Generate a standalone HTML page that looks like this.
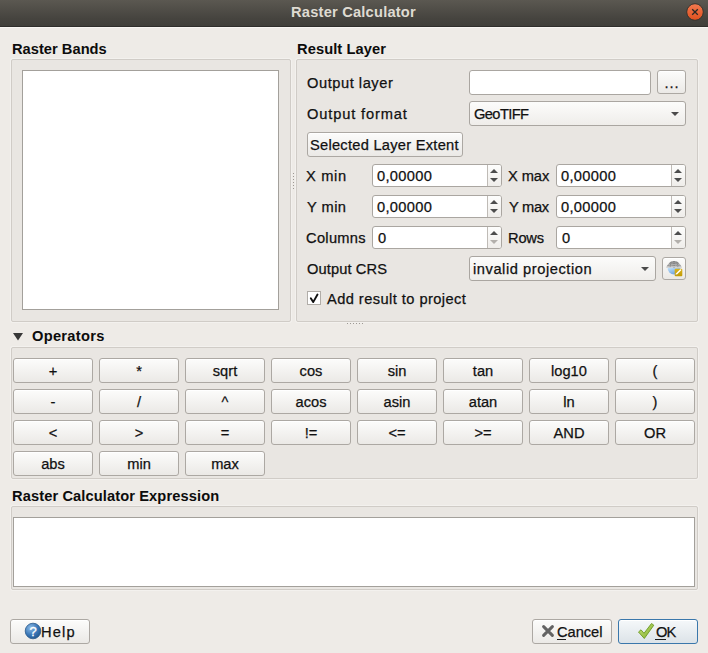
<!DOCTYPE html>
<html><head><meta charset="utf-8">
<style>
*{box-sizing:border-box;margin:0;padding:0}
html,body{width:708px;height:653px;overflow:hidden;background:#eeebe7;font-family:"Liberation Sans",sans-serif;font-size:14.67px;color:#111}
div,svg{position:absolute}
.t{white-space:nowrap;line-height:17px;height:17px;-webkit-text-stroke:0.25px #111}
.b{font-weight:bold;color:#0c0c0c;-webkit-text-stroke:0}
.grp{border:1px solid #d0ccc7;border-radius:2px;background:#e9e6e2;box-shadow:0 0 0 1px #f3f1ee}
.list{border:1px solid #a3a09b;background:#fff}
.edit{border:1px solid #aaa6a1;border-radius:3px;background:#fff}
.combo{border:1px solid #aaa6a1;border-radius:3px;background:linear-gradient(#fcfcfb,#efedea)}
.btn{border:1px solid #aca8a3;border-radius:3px;background:linear-gradient(#fcfcfb,#ebe9e6);box-shadow:inset 0 1px 0 #fff}
.bl{text-align:center}
.arrow{width:0;height:0;border-left:4px solid transparent;border-right:4px solid transparent;border-top:4px solid #4b4b4b}
.spin{border-left:1px solid #bfbbb6;background:linear-gradient(#fdfdfc,#efedea);border-radius:0 2px 2px 0}
.up{width:0;height:0;border-left:4px solid transparent;border-right:4px solid transparent;border-bottom:4px solid #4d4d4d}
.dn{width:0;height:0;border-left:4px solid transparent;border-right:4px solid transparent;border-top:4px solid #4d4d4d}
.dot{width:1px;height:1px;background:#9d9994}
</style></head><body>
<div style="left:0;top:0;width:708px;height:26px;background:linear-gradient(#5b5851,#46443f 70%,#403f3a)"></div>
<div style="left:0;top:26px;width:708px;height:1px;background:#2f2e2b"></div>
<div style="left:0;top:27px;width:708px;height:1px;background:#f8f6f2"></div>
<div class="t b" style="left:-0.50px;top:4px;width:708px;text-align:center;color:#dfdbd2;letter-spacing:0.206px">Raster Calculator</div>
<svg style="left:686px;top:3px" width="18" height="18" viewBox="0 0 18 18">
<defs><linearGradient id="cg" x1="0" y1="0" x2="0" y2="1"><stop offset="0" stop-color="#f27a50"/><stop offset="1" stop-color="#e0501e"/></linearGradient></defs>
<circle cx="9" cy="9" r="8.3" fill="url(#cg)" stroke="#36342f" stroke-width="1"/>
<path d="M6.2 6.2 L11.8 11.8 M11.8 6.2 L6.2 11.8" stroke="#2a2824" stroke-width="1.3"/>
</svg>
<div class="t b" style="left:12.00px;top:41px;letter-spacing:0.024px;">Raster Bands</div>
<div class="grp" style="left:11px;top:59px;width:280px;height:263px;"></div>
<div class="list" style="left:22px;top:70px;width:257px;height:240px;"></div>
<div class="dot" style="left:293px;top:173px"></div>
<div class="dot" style="left:347px;top:323px"></div>
<div class="dot" style="left:293px;top:176px"></div>
<div class="dot" style="left:350px;top:323px"></div>
<div class="dot" style="left:293px;top:179px"></div>
<div class="dot" style="left:353px;top:323px"></div>
<div class="dot" style="left:293px;top:182px"></div>
<div class="dot" style="left:356px;top:323px"></div>
<div class="dot" style="left:293px;top:185px"></div>
<div class="dot" style="left:359px;top:323px"></div>
<div class="dot" style="left:293px;top:188px"></div>
<div class="dot" style="left:362px;top:323px"></div>
<div class="t b" style="left:297.00px;top:41px;letter-spacing:0.082px;">Result Layer</div>
<div class="grp" style="left:296px;top:59px;width:402px;height:263px;"></div>
<div class="t " style="left:307.00px;top:75px;letter-spacing:0.542px;">Output layer</div>
<div class="edit" style="left:469px;top:70px;width:182px;height:25px;"></div>
<div class="btn" style="left:657px;top:70px;width:29px;height:24px;"></div>
<div class="t bl" style="left:657px;top:75px;width:29px;letter-spacing:1px;text-indent:1px">...</div>
<div class="t " style="left:307.00px;top:106px;letter-spacing:0.855px;">Output format</div>
<div class="combo" style="left:469px;top:101px;width:217px;height:25px;"></div>
<div class="t " style="left:474.00px;top:106px;letter-spacing:-0.600px;">GeoTIFF</div>
<div class="arrow" style="left:671px;top:112px"></div>
<div class="btn" style="left:307px;top:132px;width:156px;height:25px;"></div>
<div class="t " style="left:310.00px;top:137px;letter-spacing:0.260px;">Selected Layer Extent</div>
<div class="edit" style="left:372px;top:164px;width:130px;height:23px;"></div>
<div class="spin" style="left:487px;top:165px;width:14px;height:21px;"></div>
<div class="up" style="left:490px;top:169px"></div>
<div class="dn" style="left:490px;top:178px;border-top-color:#4d4d4d"></div>
<div class="edit" style="left:556px;top:164px;width:130px;height:23px;"></div>
<div class="spin" style="left:671px;top:165px;width:14px;height:21px;"></div>
<div class="up" style="left:674px;top:169px"></div>
<div class="dn" style="left:674px;top:178px;border-top-color:#4d4d4d"></div>
<div class="edit" style="left:372px;top:195px;width:130px;height:23px;"></div>
<div class="spin" style="left:487px;top:196px;width:14px;height:21px;"></div>
<div class="up" style="left:490px;top:200px"></div>
<div class="dn" style="left:490px;top:209px;border-top-color:#4d4d4d"></div>
<div class="edit" style="left:556px;top:195px;width:130px;height:23px;"></div>
<div class="spin" style="left:671px;top:196px;width:14px;height:21px;"></div>
<div class="up" style="left:674px;top:200px"></div>
<div class="dn" style="left:674px;top:209px;border-top-color:#4d4d4d"></div>
<div class="edit" style="left:372px;top:226px;width:130px;height:23px;"></div>
<div class="spin" style="left:487px;top:227px;width:14px;height:21px;"></div>
<div class="up" style="left:490px;top:231px"></div>
<div class="dn" style="left:490px;top:240px;border-top-color:#b3b0ac"></div>
<div class="edit" style="left:556px;top:226px;width:130px;height:23px;"></div>
<div class="spin" style="left:671px;top:227px;width:14px;height:21px;"></div>
<div class="up" style="left:674px;top:231px"></div>
<div class="dn" style="left:674px;top:240px;border-top-color:#b3b0ac"></div>
<div class="t " style="left:306.00px;top:168px;letter-spacing:0.675px;">X min</div>
<div class="t " style="left:307.00px;top:199px;letter-spacing:0.450px;">Y min</div>
<div class="t " style="left:306.00px;top:230px;letter-spacing:0.300px;">Columns</div>
<div class="t " style="left:508.00px;top:168px;letter-spacing:-0.065px;">X max</div>
<div class="t " style="left:509.00px;top:199px;letter-spacing:-0.290px;">Y max</div>
<div class="t " style="left:508.00px;top:230px;letter-spacing:-0.200px;">Rows</div>
<div class="t " style="left:377.00px;top:168px;letter-spacing:0.300px;">0,00000</div>
<div class="t " style="left:561.00px;top:168px;letter-spacing:0.300px;">0,00000</div>
<div class="t " style="left:377.00px;top:199px;letter-spacing:0.300px;">0,00000</div>
<div class="t " style="left:561.00px;top:199px;letter-spacing:0.300px;">0,00000</div>
<div class="t " style="left:378px;top:230px;">0</div>
<div class="t " style="left:562px;top:230px;">0</div>
<div class="t " style="left:307.00px;top:261px;letter-spacing:0.100px;">Output CRS</div>
<div class="combo" style="left:469px;top:256px;width:187px;height:25px;"></div>
<div class="t " style="left:473.00px;top:261px;letter-spacing:0.559px;">invalid projection</div>
<div class="arrow" style="left:641px;top:267px"></div>
<div class="btn" style="left:662px;top:257px;width:24px;height:23px;"></div>
<svg style="left:665px;top:260px" width="19" height="18" viewBox="0 0 19 18">
<defs>
<linearGradient id="gb" x1="0" y1="0" x2="0.6" y2="1"><stop offset="0" stop-color="#c4e4fc"/><stop offset="1" stop-color="#6a9fdc"/></linearGradient>
<linearGradient id="gg" x1="0" y1="0" x2="0" y2="1"><stop offset="0" stop-color="#8a8a8a"/><stop offset="1" stop-color="#cfcfcf"/></linearGradient>
<linearGradient id="yg" x1="0" y1="0" x2="0" y2="1"><stop offset="0" stop-color="#d9b21a"/><stop offset="1" stop-color="#c29a06"/></linearGradient>
</defs>
<path d="M2.5 7.7 A6.5 6.8 0 0 0 15.5 7.7 Z" fill="url(#gb)"/>
<path d="M1 7.8 C2.5 4.5 5 1 9 1 C13 1 15.5 4.5 17 7.8 Z" fill="url(#gg)"/>
<path d="M2.6 5.5 H15.4 M4.5 3.2 H13.5 M9 1 V7.8 M6 1.8 L5 7.8 M12 1.8 L13 7.8" stroke="#6e6e6e" stroke-width="0.7" stroke-dasharray="1 1" fill="none"/>
<rect x="9.7" y="8.8" width="7.6" height="7.4" rx="1" fill="url(#yg)"/>
<path d="M11.2 14.3 L15.5 10" stroke="#fff" stroke-width="1.5" stroke-linecap="round"/>
<path d="M10.8 14.8 L11.6 14" stroke="#7a6a20" stroke-width="0.8"/>
</svg>
<div class="" style="left:307px;top:291px;width:14px;height:14px;border:1px solid #b1ada8;background:#fff"></div>
<svg style="left:307px;top:291px" width="14" height="14" viewBox="0 0 14 14"><path d="M3.8 7.2 L6.2 11.1 L10.5 3.5" fill="none" stroke="#111" stroke-width="1.9" stroke-linecap="round" stroke-linejoin="round"/></svg>
<div class="t " style="left:327.00px;top:291px;letter-spacing:0.430px;">Add result to project</div>
<svg style="left:12px;top:332px" width="12" height="10" viewBox="0 0 12 10"><path d="M1 1 H11 L6 8.5 Z" fill="#383838"/></svg>
<div class="t b" style="left:32.00px;top:328px;letter-spacing:0.283px;">Operators</div>
<div class="grp" style="left:11px;top:347px;width:687px;height:132px;"></div>
<div class="btn" style="left:13px;top:358px;width:80px;height:25px;"></div>
<div class="t bl" style="left:13px;top:363px;width:80px">+</div>
<div class="btn" style="left:99px;top:358px;width:80px;height:25px;"></div>
<div class="t bl" style="left:99px;top:363px;width:80px">*</div>
<div class="btn" style="left:185px;top:358px;width:80px;height:25px;"></div>
<div class="t bl" style="left:185px;top:363px;width:80px">sqrt</div>
<div class="btn" style="left:271px;top:358px;width:80px;height:25px;"></div>
<div class="t bl" style="left:271px;top:363px;width:80px">cos</div>
<div class="btn" style="left:357px;top:358px;width:80px;height:25px;"></div>
<div class="t bl" style="left:357px;top:363px;width:80px">sin</div>
<div class="btn" style="left:443px;top:358px;width:80px;height:25px;"></div>
<div class="t bl" style="left:443px;top:363px;width:80px">tan</div>
<div class="btn" style="left:529px;top:358px;width:80px;height:25px;"></div>
<div class="t bl" style="left:529px;top:363px;width:80px">log10</div>
<div class="btn" style="left:615px;top:358px;width:80px;height:25px;"></div>
<div class="t bl" style="left:615px;top:363px;width:80px">(</div>
<div class="btn" style="left:13px;top:389px;width:80px;height:25px;"></div>
<div class="t bl" style="left:13px;top:394px;width:80px">-</div>
<div class="btn" style="left:99px;top:389px;width:80px;height:25px;"></div>
<div class="t bl" style="left:99px;top:394px;width:80px">/</div>
<div class="btn" style="left:185px;top:389px;width:80px;height:25px;"></div>
<div class="t bl" style="left:185px;top:394px;width:80px">^</div>
<div class="btn" style="left:271px;top:389px;width:80px;height:25px;"></div>
<div class="t bl" style="left:271px;top:394px;width:80px">acos</div>
<div class="btn" style="left:357px;top:389px;width:80px;height:25px;"></div>
<div class="t bl" style="left:357px;top:394px;width:80px">asin</div>
<div class="btn" style="left:443px;top:389px;width:80px;height:25px;"></div>
<div class="t bl" style="left:443px;top:394px;width:80px">atan</div>
<div class="btn" style="left:529px;top:389px;width:80px;height:25px;"></div>
<div class="t bl" style="left:529px;top:394px;width:80px">ln</div>
<div class="btn" style="left:615px;top:389px;width:80px;height:25px;"></div>
<div class="t bl" style="left:615px;top:394px;width:80px">)</div>
<div class="btn" style="left:13px;top:420px;width:80px;height:25px;"></div>
<div class="t bl" style="left:13px;top:425px;width:80px">&lt;</div>
<div class="btn" style="left:99px;top:420px;width:80px;height:25px;"></div>
<div class="t bl" style="left:99px;top:425px;width:80px">&gt;</div>
<div class="btn" style="left:185px;top:420px;width:80px;height:25px;"></div>
<div class="t bl" style="left:185px;top:425px;width:80px">=</div>
<div class="btn" style="left:271px;top:420px;width:80px;height:25px;"></div>
<div class="t bl" style="left:271px;top:425px;width:80px">!=</div>
<div class="btn" style="left:357px;top:420px;width:80px;height:25px;"></div>
<div class="t bl" style="left:357px;top:425px;width:80px">&lt;=</div>
<div class="btn" style="left:443px;top:420px;width:80px;height:25px;"></div>
<div class="t bl" style="left:443px;top:425px;width:80px">&gt;=</div>
<div class="btn" style="left:529px;top:420px;width:80px;height:25px;"></div>
<div class="t bl" style="left:529px;top:425px;width:80px">AND</div>
<div class="btn" style="left:615px;top:420px;width:80px;height:25px;"></div>
<div class="t bl" style="left:615px;top:425px;width:80px">OR</div>
<div class="btn" style="left:13px;top:451px;width:80px;height:25px;"></div>
<div class="t bl" style="left:13px;top:456px;width:80px">abs</div>
<div class="btn" style="left:99px;top:451px;width:80px;height:25px;"></div>
<div class="t bl" style="left:99px;top:456px;width:80px">min</div>
<div class="btn" style="left:185px;top:451px;width:80px;height:25px;"></div>
<div class="t bl" style="left:185px;top:456px;width:80px">max</div>
<div class="t b" style="left:12.00px;top:488px;letter-spacing:0.100px;">Raster Calculator Expression</div>
<div class="grp" style="left:11px;top:506px;width:687px;height:84px;"></div>
<div class="list" style="left:13px;top:517px;width:682px;height:70px;"></div>
<div class="btn" style="left:10px;top:619px;width:80px;height:25px;"></div>
<svg style="left:24px;top:622px" width="18" height="18" viewBox="0 0 18 18">
<defs><radialGradient id="hg" cx="0.35" cy="0.3" r="0.75"><stop offset="0" stop-color="#8dbbe6"/><stop offset="0.6" stop-color="#3b78b8"/><stop offset="1" stop-color="#22578f"/></radialGradient></defs>
<circle cx="9" cy="9" r="7.8" fill="url(#hg)" stroke="#2b5a8c" stroke-width="0.8"/>
<text x="9" y="14" text-anchor="middle" font-family="Liberation Sans" font-size="13" fill="#fff" stroke="#fff" stroke-width="0.3">?</text>
</svg>
<div class="t " style="left:41.00px;top:624px;letter-spacing:1.180px;">Help</div>
<div class="btn" style="left:532px;top:619px;width:80px;height:25px;"></div>
<svg style="left:541px;top:624px" width="14" height="14" viewBox="0 0 14 14"><path d="M2.6 2.6 L11.4 11.4 M11.4 2.6 L2.6 11.4" stroke="#636363" stroke-width="3" stroke-linecap="round"/></svg>
<div class="t " style="left:557.00px;top:624px;letter-spacing:-0.030px;">Cancel</div>
<div style="left:557px;top:639px;width:9px;height:1px;background:#1c1c1c"></div>
<div class="btn" style="left:618px;top:619px;width:80px;height:25px;border-color:#3a77ab;background:linear-gradient(#f5f8fa,#dce3e8)"></div>
<svg style="left:637px;top:622px" width="18" height="18" viewBox="0 0 18 18">
<defs><linearGradient id="okg" x1="0" y1="0" x2="1" y2="1"><stop offset="0" stop-color="#c9e27a"/><stop offset="1" stop-color="#7fae2a"/></linearGradient></defs>
<path d="M1.5 10 L4 7.8 L7 11.3 L14.5 1.5 L16.8 3.2 L7.3 16.5 Z" fill="url(#okg)" stroke="#6a9a22" stroke-width="0.9" stroke-linejoin="round"/>
</svg>
<div class="t " style="left:656.00px;top:624px;letter-spacing:-1.000px;">OK</div>
<div style="left:655px;top:639px;width:11px;height:1px;background:#1c1c1c"></div>
</body></html>
